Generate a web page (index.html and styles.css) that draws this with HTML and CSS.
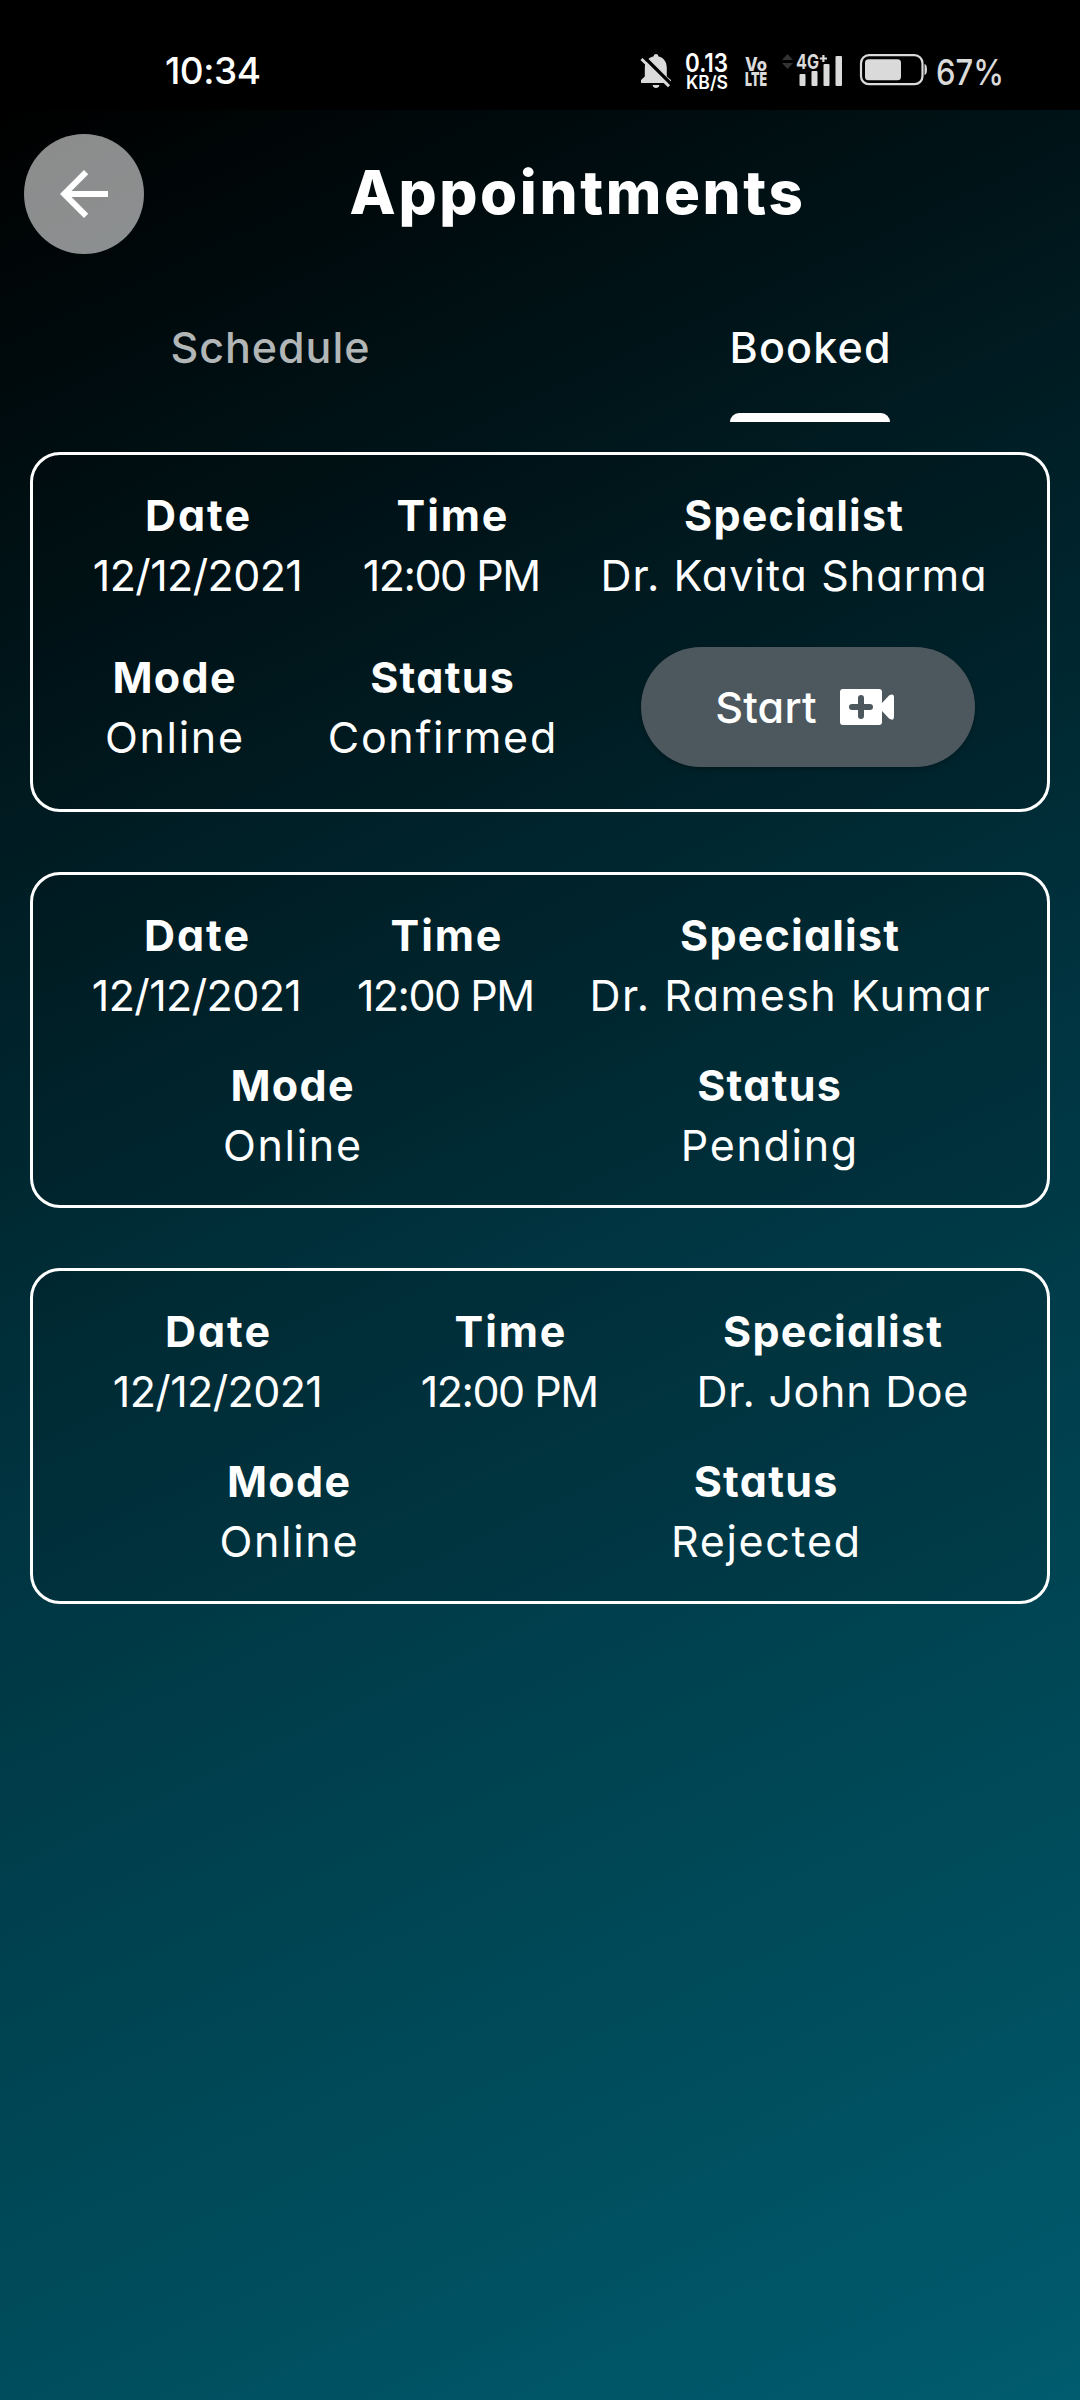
FILE: index.html
```html
<!DOCTYPE html>
<html lang="en">
<head>
<meta charset="utf-8">
<title>Appointments</title>
<link rel="stylesheet" href="styles.css">
</head>
<body>
<div class="status-bar">
  <span class="clock">10:34</span>
  <div class="status-icons">
    <svg class="i-bell" width="32" height="34" viewBox="0 0 32 34">
      <path d="M16 0c-1.300 0-2.100.9-2.300 2.200C8 3.600 4.800 8 4.800 14v8.500L1 26v3h30v-3l-4.200-3.500V14c0-6-3-10.400-8.500-11.800C18.100.9 17.300 0 16 0zM12.500 31h7c-.4 1.800-1.700 3-3.500 3s-3.100-1.200-3.500-3z"/>
      <path class="slash-gap" d="M3.500 2.500 31 30"/>
      <path class="slash" d="M1.500 5 29 32.300"/>
    </svg>
    <svg class="i-speed" width="45" height="42" viewBox="0 0 45 42">
      <text x="0" y="22" font-size="25" font-weight="600" textLength="43" lengthAdjust="spacingAndGlyphs">0.13</text>
      <text x="1" y="38.500" font-size="18" font-weight="600" textLength="42" lengthAdjust="spacingAndGlyphs">KB/S</text>
    </svg>
    <svg class="i-volte" width="23" height="42" viewBox="0 0 23 42">
      <text x="0" y="20.500" font-size="18.500" font-weight="800" textLength="22" lengthAdjust="spacingAndGlyphs">Vo</text>
      <text x="0" y="36" font-size="18.500" font-weight="900" textLength="22" lengthAdjust="spacingAndGlyphs">LTE</text>
    </svg>
    <svg class="i-signal" width="62" height="42" viewBox="0 0 62 42">
      <path class="dim" d="m5.500 4 5.500 6H0zM5.500 19 0 13h11z"/>
      <text x="14" y="19.300" font-size="20" font-weight="700" textLength="23" lengthAdjust="spacingAndGlyphs">4G</text>
      <path d="M40.300 5h2.200v2.400h2.500v2.200h-2.500V12h-2.200V9.600h-2.500V7.400h2.500z"/>
      <rect x="17.500" y="24" width="6" height="12" rx="1"/>
      <rect x="29.500" y="21" width="6" height="15" rx="1"/>
      <rect x="41.500" y="14" width="6" height="22" rx="1"/>
      <rect x="53.500" y="6" width="6.500" height="30" rx="1"/>
    </svg>
    <svg class="i-battery" width="68" height="32" viewBox="0 0 68 32">
      <rect class="shell" x="1" y="1.200" width="61.500" height="29" rx="8"/>
      <rect x="5" y="5.300" width="36" height="21" rx="3.500"/>
      <path d="M64.500 10c1.500.4 2.500 2 2.500 5.500s-1 5.200-2.500 5.600z"/>
    </svg>
    <svg class="i-percent" width="68" height="42" viewBox="0 0 68 42">
      <text x="-1" y="34.500" font-size="36" font-weight="500" textLength="68" lengthAdjust="spacingAndGlyphs">67%</text>
    </svg>
  </div>
</div>

<main class="screen">
  <header class="header">
    <button class="back" aria-label="Back">
      <svg width="72" height="72" viewBox="0 0 24 24"><path d="M20 11H7.830l5.590-5.590L12 4l-8 8 8 8 1.410-1.410L7.830 13H20v-2z"/></svg>
    </button>
    <h1 class="title">Appointments</h1>
  </header>

  <nav class="tabs">
    <a class="tab"><span class="tab-text t-schedule">Schedule</span></a>
    <a class="tab active"><span class="tab-text t-booked">Booked</span></a>
  </nav>

  <section class="list">
    <article class="card card-confirmed">
      <div class="row people">
        <div class="field"><b class="t-date">Date</b><span class="t-day">12/12/2021</span></div>
        <div class="field"><b class="t-time">Time</b><span class="t-clock">12:00 PM</span></div>
        <div class="field"><b class="t-spec">Specialist</b><span class="t-kavita">Dr. Kavita Sharma</span></div>
      </div>
      <div class="row state">
        <div class="field"><b class="t-mode">Mode</b><span class="t-value">Online</span></div>
        <div class="field"><b class="t-status">Status</b><span class="t-value">Confirmed</span></div>
        <div class="field">
          <button class="start">Start
            <svg width="54" height="36" viewBox="0 0 54 36"><path fill-rule="evenodd" d="M3 0h36q3 0 3 3v30q0 3-3 3H3q-3 0-3-3V3q0-3 3-3zM18 9v6h-6a3 3 0 0 0 0 6h6v6a3 3 0 0 0 6 0v-6h6a3 3 0 0 0 0-6h-6V9a3 3 0 0 0-6 0z"/><path d="M42 14l7-7.500q5-3 5 2v19q0 5-5 2L42 22z"/></svg>
          </button>
        </div>
      </div>
    </article>

    <article class="card card-pending">
      <div class="row people">
        <div class="field"><b class="t-date">Date</b><span class="t-day">12/12/2021</span></div>
        <div class="field"><b class="t-time">Time</b><span class="t-clock">12:00 PM</span></div>
        <div class="field"><b class="t-spec">Specialist</b><span class="t-ramesh">Dr. Ramesh Kumar</span></div>
      </div>
      <div class="row state">
        <div class="field"><b class="t-mode">Mode</b><span class="t-value">Online</span></div>
        <div class="field"><b class="t-status">Status</b><span class="t-value">Pending</span></div>
      </div>
    </article>

    <article class="card card-rejected">
      <div class="row people">
        <div class="field"><b class="t-date">Date</b><span class="t-day">12/12/2021</span></div>
        <div class="field"><b class="t-time">Time</b><span class="t-clock">12:00 PM</span></div>
        <div class="field"><b class="t-spec">Specialist</b><span class="t-john">Dr. John Doe</span></div>
      </div>
      <div class="row state">
        <div class="field"><b class="t-mode">Mode</b><span class="t-value">Online</span></div>
        <div class="field"><b class="t-status">Status</b><span class="t-value">Rejected</span></div>
      </div>
    </article>
  </section>
</main>
</body>
</html>
```
FILE: styles.css
```css
* { box-sizing: border-box; }

body {
  margin: 0;
  width: 1080px;
  height: 2400px;
  display: flex;
  flex-direction: column;
  background: #000;
  color: #fff;
  font-family: Inter, "Liberation Sans", sans-serif;
  font-feature-settings: "cv11";
  font-size: 43px;
  overflow: hidden;
}

button {
  border: 0;
  padding: 0;
  color: inherit;
  font: inherit;
  font-feature-settings: inherit;
}

svg { display: block; fill: currentColor; flex: none; overflow: visible; }

/* System status bar */
.status-bar {
  height: 110px;
  flex: none;
  display: flex;
  justify-content: space-between;
  padding: 48px 75px 0 165px;
}
.clock { font-size: 37px; font-weight: 500; line-height: 45px; letter-spacing: -0.500px; }
.status-icons { display: flex; align-items: flex-start; color: #dadada; }
.i-bell { margin: 6px 13px 0 0; }
.slash { fill: none; stroke: #dadada; stroke-width: 3; }
.slash-gap { fill: none; stroke: #000; stroke-width: 3.500px; }
.i-speed { color: #fff; margin: 2px 15px 0 0; }
.i-volte { margin: 2px 14px 0 0; }
.i-signal { margin: 2px 16px 0 0; }
.dim { fill: #333; }
.i-battery { margin: 6px 9px 0 0; }
.shell { fill: none; stroke: #dadada; stroke-width: 2.200px; }
.i-percent { margin-top: 2px; }

/* Application area */
.screen {
  flex: 1;
  background: linear-gradient(154.800deg, #000 0%, #003440 50%, #005c6e 100%);
}

.header { display: flex; align-items: center; padding: 24px 24px 0; }
.back {
  width: 120px;
  height: 120px;
  border-radius: 50%;
  background: rgba(255, 255, 255, 0.55);
  display: flex;
  align-items: center;
  justify-content: center;
}
.title {
  flex: 1;
  margin: 0 65px 0 0;
  padding-left: 20px;
  text-align: center;
  font-size: 60px;
  font-weight: 800;
  letter-spacing: 2.600px;
  line-height: 117px;
  height: 120px;
}

.tabs { display: grid; grid-template-columns: 1fr 1fr; height: 168px; }
.tab { display: flex; justify-content: center; color: #b2b6b7; font-weight: 500; }
.tab-text {
  height: 168px;
  padding-top: 63px;
  line-height: 60px;
}
.tab.active { color: #fff; }
.active .tab-text { position: relative; }
.active .tab-text::after {
  content: "";
  position: absolute;
  left: 50%;
  bottom: 0;
  width: 160px;
  height: 9px;
  margin-left: -81px;
  border-radius: 9px 9px 0 0;
  background: #fff;
}

/* Appointment cards */
.list { display: flex; flex-direction: column; gap: 60px; padding: 30px 30px 0; }
.card {
  display: flex;
  flex-direction: column;
  gap: 30px;
  padding: 30px 0;
  border: 3px solid #fff;
  border-radius: 30px;
  background: rgba(0, 0, 0, 0.1);
}
.row { display: grid; }
.field {
  display: flex;
  flex-direction: column;
  align-items: center;
  line-height: 60px;
  white-space: nowrap;
}

.card-confirmed { gap: 42px; padding-bottom: 42px; }
.card-confirmed .people { grid-template-columns: 329px 180px 503px; }
.card-confirmed .state { grid-template-columns: 282px 254px 478px; }
.card-pending .people { grid-template-columns: 327px 172px 515px; }
.card-pending .state { grid-template-columns: 518px 436px; }
.card-rejected .people { grid-template-columns: 369px 216px 429px; }
.card-rejected .state { grid-template-columns: 511px 443px; }

.start {
  width: 334px;
  height: 120px;
  padding-right: 7px;
  border-radius: 60px;
  background: #4d585e;
  box-shadow: 0 2px 4px rgba(0, 0, 0, 0.25);
  display: flex;
  align-items: center;
  justify-content: center;
  gap: 23px;
  font-weight: 500;
  letter-spacing: 0.200px;
}

/* Word tracking; the negative margin drops the trailing space so words stay centred */
.t-schedule { letter-spacing: 0.950px; margin-right: -0.950px; }
.t-booked { letter-spacing: 1.200px; margin-right: -1.200px; }
.t-date { letter-spacing: 2px; margin-right: -2px; }
.t-time { letter-spacing: 1.900px; margin-right: -1.900px; }
.t-spec { letter-spacing: 1.200px; margin-right: -1.200px; }
.t-mode { letter-spacing: 1.300px; margin-right: -1.300px; }
.t-status { letter-spacing: 1.300px; margin-right: -1.300px; }
.t-day { letter-spacing: -0.600px; }
.t-clock { letter-spacing: -1.500px; margin-right: 1.500px; }
.t-kavita { letter-spacing: 1.050px; margin-right: -1.050px; }
.t-ramesh { letter-spacing: 1.450px; margin-right: -1.450px; }
.t-john { letter-spacing: 0.700px; margin-right: -0.700px; }
.t-value { letter-spacing: 1.700px; margin-right: -1.700px; }
```
